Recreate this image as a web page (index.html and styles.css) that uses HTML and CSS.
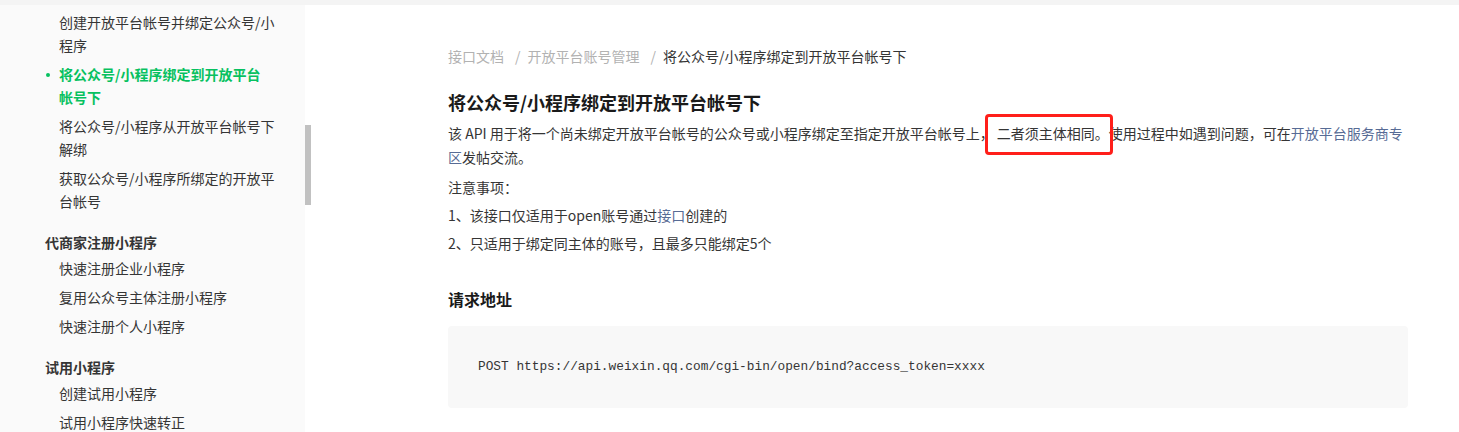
FILE: index.html
```html
<!DOCTYPE html>
<html>
  <head>
    <meta charset="utf-8">
    <meta name="viewport" content="width=device-width, initial-scale=1">
    <link rel="stylesheet" href="styles.css">
  </head>

  <body>
    <div class="topbar"></div>

    <div class="layout">
      <!-- 左侧目录 -->
      <aside class="sidebar">
        <ul class="menu">
          <li class="menu-item">创建开放平台帐号并绑定公众号/小程序</li>
          <li class="menu-item active">将公众号/小程序绑定到开放平台帐号下</li>
          <li class="menu-item">将公众号/小程序从开放平台帐号下解绑</li>
          <li class="menu-item">获取公众号/小程序所绑定的开放平台帐号</li>
        </ul>

        <div class="menu-group">代商家注册小程序</div>
        <ul class="menu">
          <li class="menu-item">快速注册企业小程序</li>
          <li class="menu-item">复用公众号主体注册小程序</li>
          <li class="menu-item">快速注册个人小程序</li>
        </ul>

        <div class="menu-group">试用小程序</div>
        <ul class="menu">
          <li class="menu-item">创建试用小程序</li>
          <li class="menu-item">试用小程序快速转正</li>
        </ul>
      </aside>

      <div class="scroll-track"><div class="scroll-thumb"></div></div>

      <!-- 正文 -->
      <main class="content">
        <div class="breadcrumb">
          <a class="crumb">接口文档</a><span class="sep">/</span><a class="crumb">开放平台账号管理</a><span class="sep">/</span><span class="crumb-current">将公众号/小程序绑定到开放平台帐号下</span>
        </div>

        <h1 class="title">将公众号/小程序绑定到开放平台帐号下</h1>

        <p class="intro">该 API 用于将一个尚未绑定开放平台帐号的公众号或小程序绑定至指定开放平台帐号上，<span class="mark">二者须主体相同。</span>使用过程中如遇到问题，可在<a class="link">开放平台服务商专区</a>发帖交流。</p>

        <div class="notes">
          <p>注意事项：</p>
          <p>1、该接口仅适用于open账号通过<a class="link">接口</a>创建的</p>
          <p>2、只适用于绑定同主体的账号，且最多只能绑定5个</p>
        </div>

        <h2 class="subtitle">请求地址</h2>

        <pre class="code">POST https://api.weixin.qq.com/cgi-bin/open/bind?access_token=xxxx</pre>
      </main>
    </div>
  </body>
</html>
```

FILE: styles.css
```css
html, body {
  height: 100%;
  margin: 0;
  overflow: hidden;
  background-color: #fff;
  font-family: "Noto Sans CJK SC", "Noto Sans", sans-serif;
  font-size: 14px;
  color: #353535;
}

.topbar {
  height: 5px;
  background-color: #f4f4f4;
}

.layout {
  display: flex;
  height: calc(100% - 5px);
}

/* 左侧目录 */
.sidebar {
  width: 305px;
  flex-shrink: 0;
  box-sizing: border-box;
  padding: 3px 30px 0 45px;
  background-color: #fafafa;
}

.menu {
  list-style: none;
  margin: 0;
  padding: 0;
}

.menu-item {
  position: relative;
  padding: 3px 0 3px 14px;
  line-height: 23px;
}

.menu-item.active {
  color: #07c160;
  font-weight: bold;
  padding-right: 6px;
}

.menu-item.active::before {
  content: "";
  position: absolute;
  left: 1px;
  top: 13px;
  width: 4px;
  height: 4px;
  border-radius: 50%;
  background-color: #07c160;
}

.menu-group {
  margin-top: 15px;
  line-height: 23px;
  font-weight: bold;
}

.scroll-track {
  width: 6px;
  flex-shrink: 0;
}

.scroll-thumb {
  margin-top: 120px;
  height: 80px;
  background-color: #c1c1c1;
}

/* 正文 */
.content {
  flex: 1;
  padding: 41px 51px 0 137px;
}

.breadcrumb {
  line-height: 20px;
}

.crumb {
  color: #b2b2b2;
}

.sep {
  color: #b2b2b2;
  margin: 0 7px 0 11px;
}

.crumb-current {
  color: #353535;
}

.title {
  margin: 22px 0 0;
  font-size: 18px;
  line-height: 28px;
  font-weight: bold;
  color: #1a1a1a;
}

.intro {
  margin: 5px 0 0;
  line-height: 24px;
}

.mark {
  position: relative;
  margin-left: 3px;
}

/* 红框标注 */
.mark::after {
  content: "";
  position: absolute;
  left: -12px;
  right: -4px;
  top: -9px;
  bottom: -12px;
  border: 3px solid #ff1f1a;
  border-radius: 4px;
}

.link {
  color: #576b95;
}

.notes {
  margin-top: 4px;
}

.notes p {
  margin: 0;
  line-height: 28px;
}

.subtitle {
  margin: 30px 0 0;
  font-size: 16px;
  line-height: 24px;
  font-weight: 600;
  color: #1a1a1a;
}

.code {
  margin: 15px 0 0;
  padding: 30px;
  border-radius: 4px;
  background-color: #f8f8f8;
  font-family: "Liberation Mono", monospace;
  font-size: 12.8px;
  line-height: 22px;
  color: #353535;
}
```
